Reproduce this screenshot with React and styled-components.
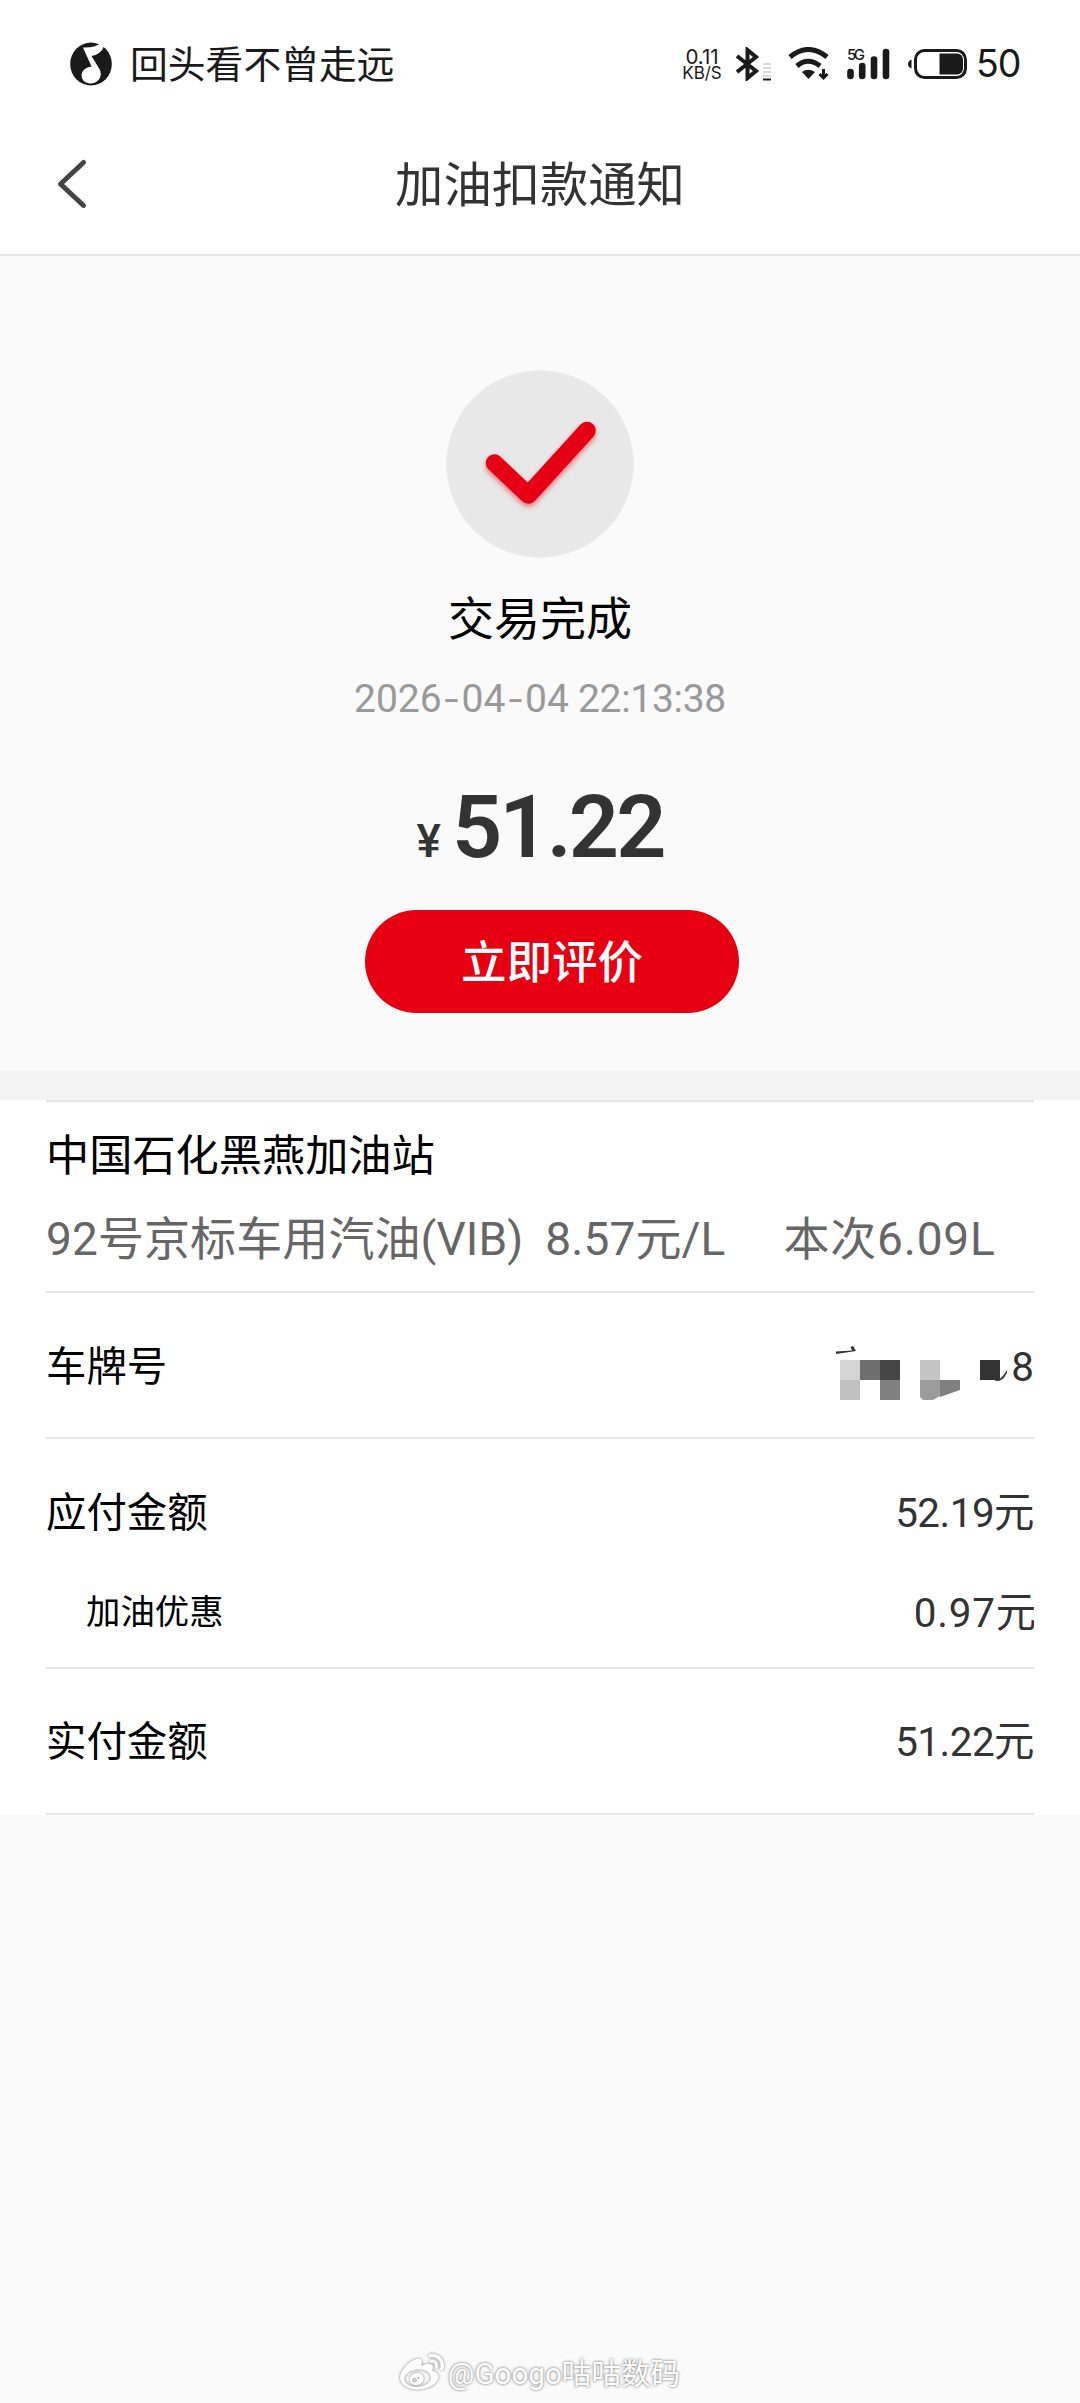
import React from 'react';
import styled, { createGlobalStyle } from 'styled-components';
import { FaWeibo } from 'react-icons/fa';

const GlobalStyle = createGlobalStyle`
    * {
        box-sizing: border-box;
    }
    body {
        margin: 0;
        background: #fafafa;
        font-family: Roboto, "Noto Sans CJK SC", sans-serif;
        color: #333;
    }
`

const Page = styled.div`
    display: flex;
    flex-direction: column;
    width: 1080px;
    height: 2403px;
    overflow: hidden;
`

const StatusBar = styled.div`
    display: flex;
    align-items: center;
    justify-content: space-between;
    height: 128px;
    padding: 0 59px 0 70px;
    background: #fff;
    color: #1a1a1a;
`

const NowPlaying = styled.div`
    display: flex;
    align-items: center;
    gap: 16px;
    font-size: 37.8px;
    line-height: 44px;
    & span {
        padding-top: 2px;
    }
`

const StatusIcons = styled.div`
    display: flex;
    align-items: center;
    font-family: Inter, Roboto, sans-serif;
    & svg {
        flex: none;
    }
`

const NetSpeed = styled.div`
    display: flex;
    flex-direction: column;
    align-items: center;
    width: 42px;
    margin-right: 12px;
    font-size: 20.5px;
    line-height: 18px;
    white-space: nowrap;
    & small {
        font-size: 17px;
        line-height: 15px;
    }
`

const IconGroup = styled.div`
    display: flex;
    align-items: center;
    gap: 17px;
`

const Battery = styled.span`
    width: 45px;
    margin-left: 8px;
    font-size: 37.5px;
    line-height: 44px;
    letter-spacing: -1px;
`

const NavBar = styled.div`
    display: grid;
    grid-template-columns: 120px 1fr 120px;
    align-items: center;
    height: 128px;
    padding-bottom: 14px;
    background: #fff;
    border-bottom: 2px solid #e8e8e8;
    & svg {
        margin-left: 56px;
    }
`

const NavTitle = styled.h1`
    margin: 0;
    padding-top: 4px;
    text-align: center;
    font-size: 48.3px;
    font-weight: 400;
    line-height: 56px;
`

const Result = styled.section`
    display: flex;
    flex-direction: column;
    align-items: center;
    height: 815px;
    padding-top: 114px;
`

const ResultTitle = styled.div`
    margin-top: 34px;
    font-size: 46px;
    line-height: 54px;
    color: #000;
`

const ResultTime = styled.div`
    display: flex;
    gap: 9px;
    margin-top: 31px;
    font-size: 39px;
    line-height: 44px;
    color: #999;
    & i {
        display: inline-block;
        margin: 0 4.5px;
        font-style: normal;
        transform: scaleX(1.3);
    }
    & span:last-child {
        letter-spacing: -0.3px;
    }
`

const Amount = styled.div`
    display: flex;
    align-items: baseline;
    gap: 14px;
    margin-top: 54px;
    font-size: 88px;
    font-weight: 600;
    line-height: 104px;
    letter-spacing: -2.9px;
    & small {
        font-size: 46px;
        font-weight: 500;
        line-height: 50px;
    }
`

const RateButton = styled.button`
    width: 374px;
    height: 103px;
    margin: 31px 0 0 24px;
    padding: 0 0 6px;
    border: none;
    border-radius: 52px;
    background: #e60012;
    color: #fff;
    font-family: inherit;
    font-size: 45.5px;
    font-weight: 500;
`

const Gap = styled.div`
    height: 29px;
    background: #f3f3f3;
`

const Details = styled.section`
    background: #fff;
`

const Block = styled.div`
    display: flex;
    flex-direction: column;
    justify-content: center;
    height: ${props => props.$height}px;
    margin: 0 46px;
    padding: ${props => props.$top || 0}px 0 ${props => props.$bottom || 0}px;
    border-top: 2px solid #e6e6e6;
    &:last-child {
        border-bottom: 2px solid #e6e6e6;
    }
`

const Station = styled.div`
    font-size: 43.2px;
    line-height: 52px;
    color: #000;
`

const Fuel = styled.div`
    display: flex;
    margin-top: 26px;
    font-size: 46px;
    line-height: 60px;
    letter-spacing: 0.1px;
    color: #666;
    white-space: nowrap;
    & span + span {
        margin-left: 22px;
    }
    & span:last-child {
        margin-left: 58px;
        letter-spacing: 0.8px;
    }
`

const Row = styled.div`
    display: flex;
    align-items: center;
    justify-content: space-between;
    height: ${props => props.$height || 90}px;
    overflow: ${props => (props.$clip ? 'hidden' : 'visible')};
    font-size: 40.4px;
    white-space: nowrap;
`

const Label = styled.span`
    margin-left: ${props => (props.$sub ? 40 : 0)}px;
    font-size: ${props => (props.$sub ? '34.4px' : 'inherit')};
    color: #000;
`

const Value = styled.span`
    margin-right: ${props => props.$shift || 0}px;
    letter-spacing: ${props => props.$spacing || 0}px;
`

const Plate = styled.span`
    display: flex;
    align-items: center;
    padding-top: 8px;
    & svg {
        margin-top: 6px;
    }
`

const Footer = styled.footer`
    display: flex;
    align-items: center;
    justify-content: center;
    gap: 4px;
    margin-top: auto;
    height: 60px;
    font-size: 29.6px;
    color: #fff;
    text-shadow: 0 0 3px rgba(0, 0, 0, 0.5), 0 0 2px rgba(0, 0, 0, 0.2);
    & svg {
        filter: drop-shadow(0 0 1.5px rgba(0, 0, 0, 0.5));
    }
    & span {
        padding-bottom: 4px;
    }
`

function MusicIcon() {
    return (
        <svg width="44" height="44" viewBox="0 0 44 44">
            <ellipse cx="21" cy="22" rx="20.800" ry="21.500" fill="#1a1a1a" />
            <path
                d="M13 5.500 Q25 6 33.500 0 Q34.500 4 32.500 7.500 Q28 13 21.500 14 L30 28 Q32 33 29 37.500 Q25 42 19.500 41.500 Q11.500 40 11.500 33 Q12.500 25.500 21.500 24.500 Z"
                fill="#fff"
            />
        </svg>
    );
}

function Bluetooth() {
    return (
        <svg width="36" height="34" viewBox="0 0 36 34" fill="none">
            <path d="M2 9 L21 24 L12.500 31 V3 L21 10 L2 25" stroke="#1a1a1a" strokeWidth="4" />
            <path d="M28 17h8M28 21h8M28 25h8M28 29h8" stroke="#ccc" strokeWidth="1.500" />
            <path d="M28 32.500h8" stroke="#1a1a1a" strokeWidth="2" />
        </svg>
    );
}

function Wifi() {
    return (
        <svg width="42" height="34" viewBox="0 0 42 34" fill="none">
            <path d="M2 10 Q20 -5 39 10" stroke="#1a1a1a" strokeWidth="5" />
            <path d="M9 19 Q20 9.500 32 19" stroke="#1a1a1a" strokeWidth="5" />
            <path d="M14 25 Q20 20.500 27 25 L20.500 32 Z" fill="#1a1a1a" />
            <path d="M35.500 22v9M31.500 27l4 4 4-4" stroke="#1a1a1a" strokeWidth="3" />
        </svg>
    );
}

function Signal() {
    return (
        <svg width="44" height="34" viewBox="0 0 44 34">
            <text x="0" y="12.500" fontSize="15" fontWeight="500" fill="#1a1a1a" textLength="18">5G</text>
            <g stroke="#1a1a1a" strokeWidth="6.600" strokeLinecap="round">
                <line x1="3.500" y1="25" x2="3.500" y2="29" />
                <line x1="15.200" y1="19" x2="15.200" y2="29" />
                <line x1="27" y1="12.500" x2="27" y2="29" />
                <line x1="39" y1="5" x2="39" y2="29" />
            </g>
        </svg>
    );
}

function BatteryIcon() {
    return (
        <svg width="60" height="34" viewBox="0 0 60 34">
            <path d="M3.500 12.500v9q-3.500-1.500-3.500-4.500t3.500-4.500z" fill="#1a1a1a" />
            <rect x="7.500" y="3.500" width="50" height="27" rx="9" fill="none" stroke="#1a1a1a" strokeWidth="3" />
            <path d="M31.500 6.500H49a6 6 0 0 1 6 6v9a6 6 0 0 1-6 6H31.500z" fill="#1a1a1a" />
        </svg>
    );
}

function BackIcon() {
    return (
        <svg width="34" height="52" viewBox="0 0 34 52" fill="none" stroke="#444" strokeWidth="5" strokeLinecap="round" strokeLinejoin="round">
            <polyline points="27.500,4.500 4.500,26 27.500,47.500" />
        </svg>
    );
}

function CheckIcon() {
    return (
        <svg width="188" height="188" viewBox="0 0 188 188">
            <defs>
                <filter id="glow" x="-20%" y="-20%" width="140%" height="150%">
                    <feDropShadow dx="0" dy="3" stdDeviation="2.500" floodColor="#e60012" floodOpacity="0.5" />
                </filter>
            </defs>
            <circle cx="94" cy="94" r="93.700" fill="#e8e8e8" />
            <polyline
                points="48.500,93 82.300,125 141,60.500"
                fill="none"
                stroke="#e60012"
                strokeWidth="17.500"
                strokeLinecap="round"
                strokeLinejoin="round"
                filter="url(#glow)"
            />
        </svg>
    );
}

// plate number with everything but the last digit blocked out
function PlateMask() {
    return (
        <svg width="175" height="60" viewBox="0 0 175 60">
            <path d="M0 11.500 L16 10.500 L14.500 7 L17 6 L20 11 L0 14 Z" fill="#333" />
            <rect x="4" y="20" width="20" height="20" fill="#d4d4d4" />
            <rect x="24" y="20" width="20" height="20" fill="#6e6e6e" />
            <rect x="44" y="20" width="20" height="20" fill="#454545" />
            <rect x="4" y="40" width="20" height="20" fill="#c1c1c1" />
            <rect x="44" y="40" width="20" height="20" fill="#808080" />
            <rect x="84" y="20" width="20" height="20" fill="#c5c5c5" />
            <path d="M84 40 H104 V56 L97 60 H87 L84 57 Z" fill="#9b9b9b" />
            <path d="M104 40 H124 V50 L104 57 Z" fill="#808080" />
            <rect x="144" y="20" width="20" height="20" fill="#333" />
            <path d="M158 40 Q165 41 171 30 V33 Q165 44 158 40 Z" fill="#333" />
        </svg>
    );
}

function App() {
    return (
        <Page>
            <GlobalStyle />
            <StatusBar>
                <NowPlaying>
                    <MusicIcon />
                    <span>回头看不曾走远</span>
                </NowPlaying>
                <StatusIcons>
                    <NetSpeed>
                        0.11
                        <small>KB/S</small>
                    </NetSpeed>
                    <IconGroup>
                        <Bluetooth />
                        <Wifi />
                        <Signal />
                        <BatteryIcon />
                    </IconGroup>
                    <Battery>50</Battery>
                </StatusIcons>
            </StatusBar>
            <NavBar>
                <BackIcon />
                <NavTitle>加油扣款通知</NavTitle>
            </NavBar>
            <Result>
                <CheckIcon />
                <ResultTitle>交易完成</ResultTitle>
                <ResultTime>
                    <span>2026<i>-</i>04<i>-</i>04</span>
                    <span>22:13:38</span>
                </ResultTime>
                <Amount>
                    <small>¥</small>
                    <span>51.22</span>
                </Amount>
                <RateButton>立即评价</RateButton>
            </Result>
            <Gap />
            <Details>
                <Block $height={191} $top={7}>
                    <Station>中国石化黑燕加油站</Station>
                    <Fuel>
                        <span>92号京标车用汽油(VIB)</span>
                        <span>8.57元/L</span>
                        <span>本次6.09L</span>
                    </Fuel>
                </Block>
                <Block $height={146} $bottom={4}>
                    <Row>
                        <Label>车牌号</Label>
                        <Plate>
                            <PlateMask />8
                        </Plate>
                    </Row>
                </Block>
                <Block $height={230} $top={12}>
                    <Row $height={100}>
                        <Label>应付金额</Label>
                        <Value $spacing={-0.5}>52.19元</Value>
                    </Row>
                    <Row $height={100} $clip>
                        <Label $sub>加油优惠</Label>
                        <Value $shift={-3} $spacing={0.8}>0.97元</Value>
                    </Row>
                </Block>
                <Block $height={148} $bottom={6}>
                    <Row>
                        <Label>实付金额</Label>
                        <Value $spacing={-0.5}>51.22元</Value>
                    </Row>
                </Block>
            </Details>
            <Footer>
                <FaWeibo size={44} />
                <span>@Googo咕咕数码</span>
            </Footer>
        </Page>
    );
}

export default App;
